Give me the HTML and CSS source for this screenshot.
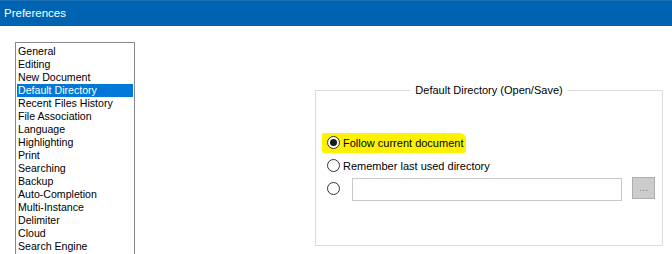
FILE: index.html
```html
<!DOCTYPE html>
<html>
<head>
<meta charset="utf-8">
<link rel="stylesheet" href="styles.css">
</head>
<body>
<div class="titlebar">Preferences</div>
<div class="content">
  <ul class="listbox">
    <li>General</li>
    <li>Editing</li>
    <li>New Document</li>
    <li class="selected">Default Directory</li>
    <li>Recent Files History</li>
    <li>File Association</li>
    <li>Language</li>
    <li>Highlighting</li>
    <li>Print</li>
    <li>Searching</li>
    <li>Backup</li>
    <li>Auto-Completion</li>
    <li>Multi-Instance</li>
    <li>Delimiter</li>
    <li>Cloud</li>
    <li>Search Engine</li>
  </ul>
  <div class="group">
    <span class="legend">Default Directory (Open/Save)</span>
    <div class="row">
      <label class="option highlight"><span class="radio checked"></span><span class="text">Follow current document</span></label>
    </div>
    <div class="row">
      <label class="option"><span class="radio"></span><span class="text">Remember last used directory</span></label>
    </div>
    <div class="row">
      <span class="radio"></span>
      <span class="textbox"></span>
      <span class="browse">...</span>
    </div>
  </div>
</div>
</body>
</html>
```
FILE: styles.css
```css
html, body {
  margin: 0;
  padding: 0;
  background: #ffffff;
}
body {
  width: 672px;
  height: 254px;
  overflow: hidden;
  font-family: "Liberation Sans", Arial, sans-serif;
  color: #000;
}
.titlebar {
  height: 26px;
  box-sizing: border-box;
  background: #0063b1;
  border-top: 1px solid #1b70b6;
  color: #fff;
  font-size: 11.5px;
  line-height: 24px;
  padding-left: 4px;
}
.content {
  display: flex;
  align-items: flex-start;
  height: 228px;
  overflow: hidden;
}
.listbox {
  list-style: none;
  margin: 16px 0 0 15px;
  padding: 2px 1px;
  width: 116px;
  height: 240px;
  border: 1px solid #828790;
  font-size: 10.6px;
  line-height: 13px;
  flex: none;
}
.listbox li {
  height: 13px;
  padding-left: 1px;
  white-space: nowrap;
}
.listbox li.selected {
  background: #0078d7;
  color: #fff;
}
.group {
  position: relative;
  margin: 64px 0 0 180px;
  width: 348px;
  height: 156px;
  border: 1px solid #dcdcdc;
  padding: 40px 0 0 11px;
  box-sizing: border-box;
  display: flex;
  flex-direction: column;
  flex: none;
}
.legend {
  position: absolute;
  top: -9px;
  left: 50%;
  transform: translateX(-50%);
  background: #fff;
  padding: 0 5px;
  font-size: 11px;
  line-height: 16px;
  white-space: nowrap;
}
.row {
  height: 23px;
  display: flex;
  align-items: center;
  font-size: 11px;
}
.option {
  display: inline-flex;
  align-items: center;
  height: 20px;
}
.highlight {
  background: #fff200;
  margin-left: -5px;
  padding: 0 3px 0 5px;
  border-radius: 2px 6px 2px 2px;
}
.radio {
  width: 11px;
  height: 11px;
  border: 1px solid #333;
  border-radius: 50%;
  background: #fff;
  flex: none;
  position: relative;
}
.radio.checked::after {
  content: "";
  position: absolute;
  left: 2px;
  top: 2px;
  width: 7px;
  height: 7px;
  border-radius: 50%;
  background: #1a1a1a;
}
.text {
  margin-left: 3px;
  white-space: nowrap;
}
.textbox {
  margin-left: 12px;
  width: 268px;
  height: 21px;
  border: 1px solid #c8c8c8;
  background: #fff;
  flex: none;
  align-self: flex-start;
  margin-top: 1px;
}
.browse {
  margin-left: 10px;
  width: 21px;
  height: 20px;
  border: 1px solid #adadad;
  background: #cccccc;
  color: #8a8a8a;
  font-size: 11px;
  line-height: 18px;
  text-align: center;
  flex: none;
  align-self: flex-start;
}
```
